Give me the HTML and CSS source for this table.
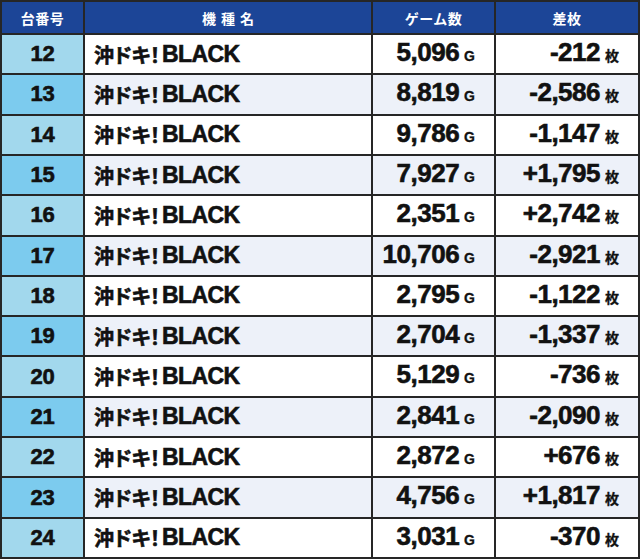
FILE: index.html
```html
<!DOCTYPE html>
<html lang="ja">
<head>
<meta charset="utf-8">
<title>沖ドキ！BLACK</title>
<link rel="stylesheet" href="styles.css">
</head>
<body>
<div class="table">
  <div class="hd">台番号</div>
  <div class="hd hd-name">機種名</div>
  <div class="hd">ゲーム数</div>
  <div class="hd">差枚</div>

  <div class="row"><div class="c num">12</div><div class="c name"><span class="jp">沖ドキ！</span>BLACK</div><div class="c val">5,096<span class="u">G</span></div><div class="c val">-212<span class="u">枚</span></div></div>
  <div class="row"><div class="c num">13</div><div class="c name"><span class="jp">沖ドキ！</span>BLACK</div><div class="c val">8,819<span class="u">G</span></div><div class="c val">-2,586<span class="u">枚</span></div></div>
  <div class="row"><div class="c num">14</div><div class="c name"><span class="jp">沖ドキ！</span>BLACK</div><div class="c val">9,786<span class="u">G</span></div><div class="c val">-1,147<span class="u">枚</span></div></div>
  <div class="row"><div class="c num">15</div><div class="c name"><span class="jp">沖ドキ！</span>BLACK</div><div class="c val">7,927<span class="u">G</span></div><div class="c val">+1,795<span class="u">枚</span></div></div>
  <div class="row"><div class="c num">16</div><div class="c name"><span class="jp">沖ドキ！</span>BLACK</div><div class="c val">2,351<span class="u">G</span></div><div class="c val">+2,742<span class="u">枚</span></div></div>
  <div class="row"><div class="c num">17</div><div class="c name"><span class="jp">沖ドキ！</span>BLACK</div><div class="c val">10,706<span class="u">G</span></div><div class="c val">-2,921<span class="u">枚</span></div></div>
  <div class="row"><div class="c num">18</div><div class="c name"><span class="jp">沖ドキ！</span>BLACK</div><div class="c val">2,795<span class="u">G</span></div><div class="c val">-1,122<span class="u">枚</span></div></div>
  <div class="row"><div class="c num">19</div><div class="c name"><span class="jp">沖ドキ！</span>BLACK</div><div class="c val">2,704<span class="u">G</span></div><div class="c val">-1,337<span class="u">枚</span></div></div>
  <div class="row"><div class="c num">20</div><div class="c name"><span class="jp">沖ドキ！</span>BLACK</div><div class="c val">5,129<span class="u">G</span></div><div class="c val">-736<span class="u">枚</span></div></div>
  <div class="row"><div class="c num">21</div><div class="c name"><span class="jp">沖ドキ！</span>BLACK</div><div class="c val">2,841<span class="u">G</span></div><div class="c val">-2,090<span class="u">枚</span></div></div>
  <div class="row"><div class="c num">22</div><div class="c name"><span class="jp">沖ドキ！</span>BLACK</div><div class="c val">2,872<span class="u">G</span></div><div class="c val">+676<span class="u">枚</span></div></div>
  <div class="row"><div class="c num">23</div><div class="c name"><span class="jp">沖ドキ！</span>BLACK</div><div class="c val">4,756<span class="u">G</span></div><div class="c val">+1,817<span class="u">枚</span></div></div>
  <div class="row"><div class="c num">24</div><div class="c name"><span class="jp">沖ドキ！</span>BLACK</div><div class="c val">3,031<span class="u">G</span></div><div class="c val">-370<span class="u">枚</span></div></div>
</div>
</body>
</html>
```
FILE: styles.css
```css
html, body {
  margin: 0;
  padding: 0;
  background: #fff;
}

.table {
  box-sizing: border-box;
  width: 640px;
  height: 559px;
  display: grid;
  grid-template-columns: 81px 286px 121px 142px;
  grid-template-rows: 31px repeat(13, 1fr);
  gap: 2px;
  padding: 2px;
  background: #262626;
  font-family: "Liberation Sans", "Noto Sans CJK JP", sans-serif;
  font-weight: 700;
  color: #111;
}

.row {
  display: contents;
}

.hd {
  background: #1c4597;
  color: #fff;
  font-family: "Noto Sans CJK JP", sans-serif;
  font-size: 14px;
  font-weight: 700;
  display: flex;
  align-items: center;
  justify-content: center;
  letter-spacing: 0.5px;
}

.hd-name {
  letter-spacing: 5px;
  padding-left: 5px;
}

.c {
  background: #fff;
  display: flex;
  align-items: center;
  white-space: nowrap;
  -webkit-text-stroke: 0.6px #111;
}

.row:nth-child(even) .c {
  background: #edf1f9;
}

.c.num {
  background: #a2d8ed;
  justify-content: center;
  font-size: 22px;
  letter-spacing: -0.3px;
}

.row:nth-child(even) .c.num {
  background: #7ccbee;
}

.name {
  padding-left: 9px;
  font-size: 23px;
  letter-spacing: -0.6px;
}

.jp {
  font-family: "Noto Sans CJK JP", sans-serif;
  font-size: 20px;
  font-weight: 700;
  font-feature-settings: "palt";
  letter-spacing: 0;
  margin-right: 2px;
}

.val {
  justify-content: flex-end;
  align-items: baseline;
  padding-right: 19px;
  padding-top: 2px;
  font-size: 26px;
  letter-spacing: -0.5px;
}

.u {
  font-family: "Liberation Sans", "Noto Sans CJK JP", sans-serif;
  font-size: 14px;
  margin-left: 5px;
  letter-spacing: 0;
  -webkit-text-stroke: 0.3px #111;
}
```
